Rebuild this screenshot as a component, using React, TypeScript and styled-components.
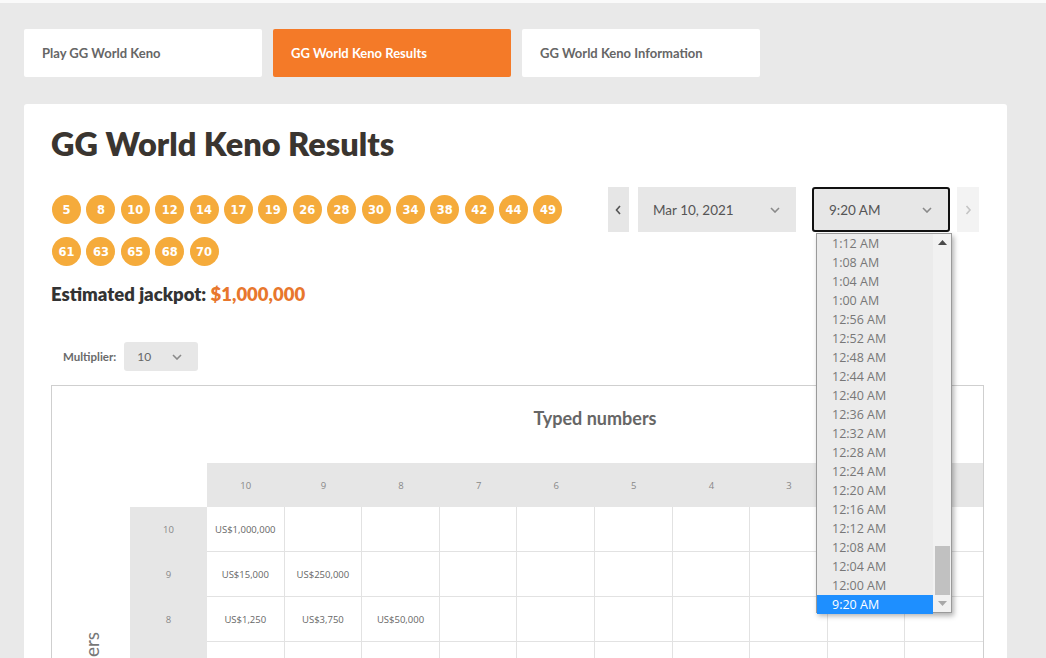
import React from "react";
import styled, { createGlobalStyle } from "styled-components";

const GlobalStyle = createGlobalStyle`
  * { box-sizing: border-box; }
  html, body { margin: 0; padding: 0; }
  body {
    background: #e9e9e9;
    border-top: 3px solid #fafafa;
    font-family: Lato, "Open Sans", sans-serif;
    color: #333;
  }
`;

const tabs = ["Play GG World Keno", "GG World Keno Results", "GG World Keno Information"];
const drawn = [5, 8, 10, 12, 14, 17, 19, 26, 28, 30, 34, 38, 42, 44, 49, 61, 63, 65, 68, 70];
const times = [
  "1:12 AM", "1:08 AM", "1:04 AM", "1:00 AM", "12:56 AM", "12:52 AM", "12:48 AM",
  "12:44 AM", "12:40 AM", "12:36 AM", "12:32 AM", "12:28 AM", "12:24 AM", "12:20 AM",
  "12:16 AM", "12:12 AM", "12:08 AM", "12:04 AM", "12:00 AM", "9:20 AM",
];
const typed = [10, 9, 8, 7, 6, 5, 4, 3, 2, 1];

// prizes[matched][typed]
const prizes: Record<number, Record<number, string>> = {
  10: { 10: "US$1,000,000" },
  9: { 10: "US$15,000", 9: "US$250,000" },
  8: { 10: "US$1,250", 9: "US$3,750", 8: "US$50,000" },
  7: { 10: "US$150", 9: "US$300", 8: "US$1,000", 7: "US$7,500" },
  6: { 10: "US$20", 9: "US$50", 8: "US$100", 7: "US$250", 6: "US$1,500" },
  5: { 10: "US$5", 9: "US$10", 8: "US$20", 7: "US$30", 6: "US$100", 5: "US$500" },
  4: { 8: "US$5", 7: "US$5", 6: "US$10", 5: "US$15", 4: "US$100" },
  3: { 6: "US$2", 5: "US$2", 4: "US$5", 3: "US$25" },
  2: { 4: "US$1", 3: "US$2", 2: "US$10" },
  1: { 1: "US$3" },
};

const Chevron: React.FC<{ dir: "down" | "left" | "right"; color?: string }> = ({
  dir,
  color = "#8a8a8a",
}) => {
  if (dir === "down")
    return (
      <svg width="10" height="6" viewBox="0 0 10 6">
        <polyline points="1,1 5,5 9,1" fill="none" stroke={color} strokeWidth="1.6" />
      </svg>
    );
  const pts = dir === "left" ? "5,1 1.5,5 5,9" : "1.5,1 5,5 1.5,9";
  return (
    <svg width="7" height="10" viewBox="0 0 7 10">
      <polyline points={pts} fill="none" stroke={color} strokeWidth="1.6" />
    </svg>
  );
};

const App: React.FC = () => {
  return (
    <>
      <GlobalStyle />
      <Page>
        <Tabs>
          {tabs.map((t, i) => (
            <Tab key={t} $active={i === 1}>
              {t}
            </Tab>
          ))}
        </Tabs>

        <Card>
          <Title>GG World Keno Results</Title>

          <TopRow>
            <Balls>
              {drawn.map((n) => (
                <Ball key={n}>{n}</Ball>
              ))}
            </Balls>

            <Controls>
              <StepBtn $dim={false}>
                <Chevron dir="left" color="#555" />
              </StepBtn>
              <Select $w={158}>
                Mar 10, 2021
                <Chevron dir="down" />
              </Select>
              <TimeWrap>
                <Select $w={138} $focused>
                  9:20 AM
                  <Chevron dir="down" />
                </Select>
                <Dropdown>
                  <Options>
                    {times.map((t, i) => (
                      <Option key={t} $selected={i === times.length - 1}>
                        {t}
                      </Option>
                    ))}
                  </Options>
                  <Scrollbar>
                    <ScrollArrow>
                      <svg width="9" height="5" viewBox="0 0 9 5">
                        <polygon points="0,5 4.5,0 9,5" fill="#4a4a4a" />
                      </svg>
                    </ScrollArrow>
                    <Track>
                      <Thumb />
                    </Track>
                    <ScrollArrow>
                      <svg width="9" height="5" viewBox="0 0 9 5">
                        <polygon points="0,0 4.5,5 9,0" fill="#a8a8a8" />
                      </svg>
                    </ScrollArrow>
                  </Scrollbar>
                </Dropdown>
              </TimeWrap>
              <StepBtn $dim>
                <Chevron dir="right" color="#c4c4c4" />
              </StepBtn>
            </Controls>
          </TopRow>

          <Jackpot>
            Estimated jackpot: <Amount>$1,000,000</Amount>
          </Jackpot>

          <MultiplierRow>
            <MultLabel>Multiplier:</MultLabel>
            <MultSelect>
              10
              <Chevron dir="down" />
            </MultSelect>
          </MultiplierRow>

          <PayTable>
            <Blank $span={2} />
            <TypedHead>Typed numbers</TypedHead>
            <Blank $span={2} />
            {typed.map((t) => (
              <ColHead key={t}>{t}</ColHead>
            ))}
            <SideLabel>
              <span>Matched numbers</span>
            </SideLabel>
            {typed.map((m) => (
              <React.Fragment key={m}>
                <RowHead>{m}</RowHead>
                {typed.map((t) => (
                  <Cell key={t} $last={t === 1}>
                    {prizes[m]?.[t] ?? ""}
                  </Cell>
                ))}
              </React.Fragment>
            ))}
          </PayTable>
        </Card>
      </Page>
    </>
  );
};

export default App;

const Page = styled.div`
  padding: 26px 0 0 24px;
  width: 1007px;
`;

const Tabs = styled.div`
  display: flex;
  gap: 11px;
`;

const Tab = styled.div<{ $active: boolean }>`
  width: 238px;
  height: 48px;
  display: flex;
  align-items: center;
  padding-left: 18px;
  border-radius: 2px;
  background: ${(p) => (p.$active ? "#f47a28" : "#fff")};
  color: ${(p) => (p.$active ? "#fff" : "#666")};
  font-size: 13px;
  font-weight: 700;
`;

const Card = styled.div`
  margin-top: 27px;
  background: #fff;
  border-radius: 3px;
  padding: 20px 23px 40px 27px;
`;

const Title = styled.h1`
  margin: 0;
  font-size: 32.5px;
  line-height: 40px;
  font-weight: 800;
  color: #3a3530;
`;

const TopRow = styled.div`
  margin-top: 23px;
  display: flex;
  justify-content: space-between;
  align-items: flex-start;
`;

const Balls = styled.div`
  margin-top: 8px;
  padding-left: 1px;
  width: 525px;
  display: flex;
  flex-wrap: wrap;
  gap: 13px 5.4px;
`;

const Ball = styled.div`
  width: 29px;
  height: 29px;
  border-radius: 50%;
  background: #f5ab3b;
  color: #fff;
  display: flex;
  align-items: center;
  justify-content: center;
  font-family: "DejaVu Sans", sans-serif;
  font-size: 11.5px;
  font-weight: 700;
`;

const Controls = styled.div`
  display: flex;
  height: 45px;
  margin-right: 5px;
`;

const StepBtn = styled.div<{ $dim: boolean }>`
  width: ${(p) => (p.$dim ? 22 : 21)}px;
  margin: ${(p) => (p.$dim ? "0 0 0 7px" : "0 9px 0 0")};
  background: ${(p) => (p.$dim ? "#f3f3f3" : "#e6e6e6")};
  display: flex;
  align-items: center;
  justify-content: center;
`;

const Select = styled.div<{ $w: number; $focused?: boolean }>`
  width: ${(p) => p.$w}px;
  height: 45px;
  display: flex;
  align-items: center;
  justify-content: space-between;
  padding: 0 16px 0 15px;
  background: #e7e7e7;
  border: ${(p) => (p.$focused ? "2px solid #111" : "none")};
  border-radius: ${(p) => (p.$focused ? "3px" : "0")};
  color: #555;
  font-size: 13.5px;
`;

const TimeWrap = styled.div`
  position: relative;
  margin-left: 16px;
`;

const Dropdown = styled.div`
  position: absolute;
  top: calc(100% + 1px);
  left: 4px;
  width: 136px;
  height: 380px;
  display: flex;
  background: #ebebeb;
  border: 1px solid #9a9a9a;
  box-shadow: 2px 3px 5px rgba(0, 0, 0, 0.3);
  z-index: 10;
`;

const Options = styled.div`
  flex: 1;
  display: flex;
  flex-direction: column;
`;

const Option = styled.div<{ $selected: boolean }>`
  height: 19px;
  line-height: 19px;
  padding-left: 15px;
  font-family: "Open Sans", sans-serif;
  font-size: 12.5px;
  background: ${(p) => (p.$selected ? "#1e8fff" : "transparent")};
  color: ${(p) => (p.$selected ? "#fff" : "#777")};
`;

const Scrollbar = styled.div`
  width: 18px;
  background: #f1f1f1;
  display: flex;
  flex-direction: column;
`;

const ScrollArrow = styled.div`
  height: 17px;
  display: flex;
  align-items: center;
  justify-content: center;
`;

const Track = styled.div`
  flex: 1;
  display: flex;
  flex-direction: column;
  justify-content: flex-end;
`;

const Thumb = styled.div`
  height: 49px;
  margin: 0 1px 0 2px;
  background: #c1c1c1;
`;

const Jackpot = styled.div`
  margin-top: 17px;
  font-size: 18.5px;
  line-height: 22px;
  font-weight: 800;
  color: #333;
`;

const Amount = styled.span`
  color: #e8772d;
`;

const MultiplierRow = styled.div`
  margin-top: 37px;
  display: flex;
  align-items: center;
  gap: 8px;
  padding-left: 12px;
`;

const MultLabel = styled.span`
  font-size: 11.5px;
  font-weight: 700;
  color: #6a6a6a;
`;

const MultSelect = styled.div`
  width: 74px;
  height: 29px;
  border-radius: 3px;
  background: #e7e7e7;
  display: flex;
  align-items: center;
  justify-content: space-between;
  padding: 0 16px 0 13px;
  font-size: 12px;
  color: #666;
`;

const PayTable = styled.div`
  margin-top: 14px;
  border: 1px solid #cfcfcf;
  display: grid;
  grid-template-columns: 78px 77px repeat(10, 1fr);
  grid-template-rows: 77px 44px;
  grid-auto-rows: 45px;
`;

const Blank = styled.div<{ $span: number }>`
  grid-column: span ${(p) => p.$span};
`;

const TypedHead = styled.div`
  grid-column: span 10;
  padding-top: 21px;
  text-align: center;
  font-size: 18px;
  line-height: 22px;
  font-weight: 700;
  color: #666;
`;

const smallText = `
  display: flex;
  align-items: center;
  justify-content: center;
  font-family: "Open Sans", sans-serif;
  font-size: 9.5px;
`;

const ColHead = styled.div`
  ${smallText};
  background: #e6e6e6;
  color: #888;
`;

const RowHead = styled.div`
  ${smallText};
  background: #e6e6e6;
  color: #888;
`;

const Cell = styled.div<{ $last: boolean }>`
  ${smallText};
  color: #666;
  border-right: ${(p) => (p.$last ? "none" : "1px solid #e2e2e2")};
  border-bottom: 1px solid #e2e2e2;
`;

const SideLabel = styled.div`
  grid-column: 1;
  grid-row: 3 / span 10;
  display: flex;
  justify-content: center;
  align-items: flex-start;
  padding-top: 125px;

  span {
    writing-mode: vertical-rl;
    transform: rotate(180deg);
    font-size: 19px;
    color: #777;
    white-space: nowrap;
  }
`;
